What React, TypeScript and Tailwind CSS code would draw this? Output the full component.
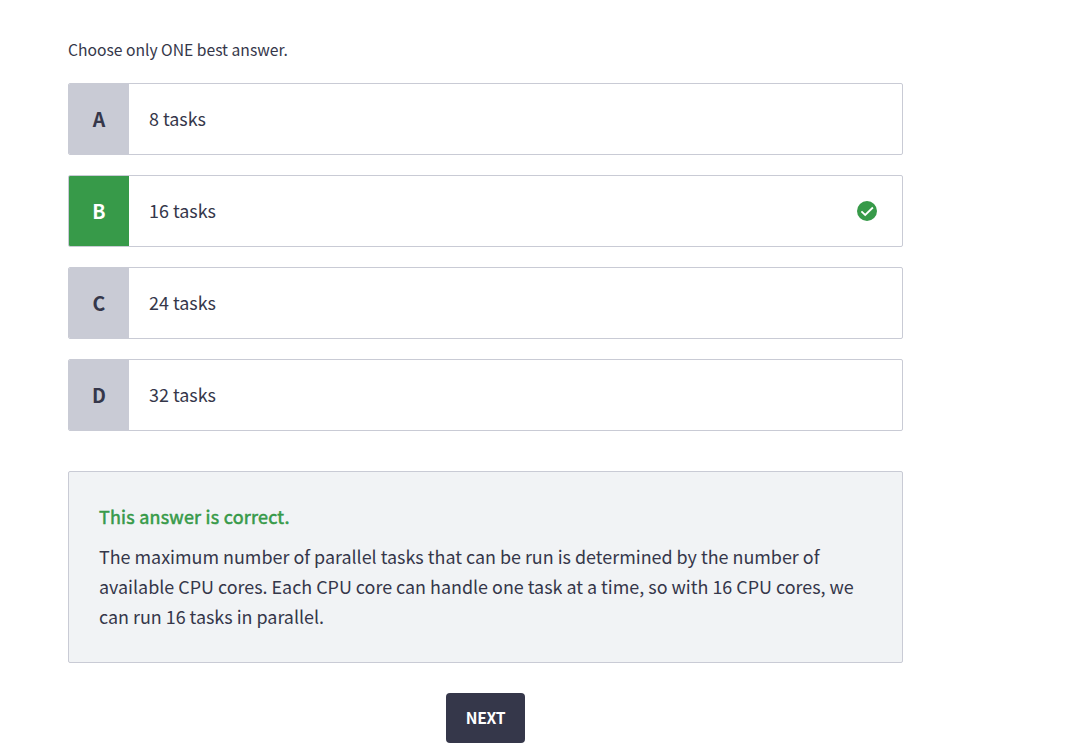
const options = [
  { letter: "A", text: "8 tasks", correct: false },
  { letter: "B", text: "16 tasks", correct: true },
  { letter: "C", text: "24 tasks", correct: false },
  { letter: "D", text: "32 tasks", correct: false },
];

export default function App() {
  return (
    <main className="h-[751px] w-full overflow-hidden bg-white font-['Noto_Sans_CJK_SC','Noto_Sans',sans-serif] text-[#35374a]">
      <div className="ml-[68px] flex w-[835px] flex-col pt-10">
        <p className="text-[15.67px] leading-5">Choose only ONE best answer.</p>
        <ul className="mt-[23px] flex flex-col gap-5">
          {options.map((o) => (
            <li key={o.letter} className="flex h-[72px] items-stretch overflow-hidden rounded-xs border border-[#c9cbd5]">
              <span
                className={
                  o.correct
                    ? "flex w-[60px] items-center justify-center bg-[#379a49] pb-px text-[19.5px] leading-7 font-bold text-white"
                    : "flex w-[60px] items-center justify-center bg-[#c9cbd5] pb-px text-[19.5px] leading-7 font-bold"
                }
              >
                {o.letter}
              </span>
              <span className="flex flex-1 items-center pb-0.5 pl-5 text-[17.92px] leading-7">{o.text}</span>
              {o.correct && (
                <svg className="mr-[25px] size-5 self-center" viewBox="0 0 20 20" fill="none">
                  <circle cx="10" cy="10" r="10" fill="#379a49" />
                  <path d="M4.4 10.4 8.2 14l7.7-7.5" stroke="#fff" strokeWidth="1.8" />
                </svg>
              )}
            </li>
          ))}
        </ul>
        <section className="mt-10 h-[192px] rounded-xs border border-[#c9cbd5] bg-[#f1f3f5] px-[30px] pt-[29px] text-[17.915px] leading-[30px]">
          <h2 className="tracking-[0.26px] text-[#379a49] [-webkit-text-stroke:0.55px_#379a49]">This answer is correct.</h2>
          <p className="mt-[10px] whitespace-nowrap">
            The maximum number of parallel tasks that can be run is determined by the number of
            <br />
            available CPU cores. Each CPU core can handle one task at a time, so with 16 CPU cores, we
            <br />
            can run 16 tasks in parallel.
          </p>
        </section>
        <button className="mt-[30px] h-[50px] w-[79px] self-center rounded-[4px] bg-[#35374a] text-[15.7px] font-bold tracking-[-0.3px] text-white">
          NEXT
        </button>
      </div>
    </main>
  );
}
